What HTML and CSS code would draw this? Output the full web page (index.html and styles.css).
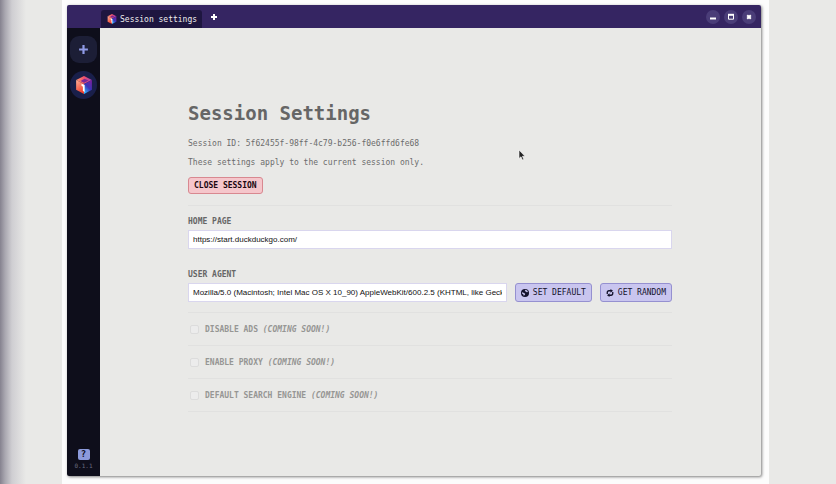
FILE: index.html
```html
<!DOCTYPE html>
<html lang="en">
<head>
    <meta charset="UTF-8">
    <meta name="viewport" content="width=device-width, initial-scale=1.0">
    <link rel="stylesheet" href="styles.css">
    <title>Session settings</title>
</head>
<body>
    <!-- shared logo -->
    <svg class="defs" width="0" height="0" aria-hidden="true">
        <defs>
            <linearGradient id="gradTop" x1="0" y1="0" x2="1" y2="0">
                <stop offset="0" stop-color="#ff9a70"/>
                <stop offset="0.5" stop-color="#f0506a"/>
                <stop offset="1" stop-color="#a03fb5"/>
            </linearGradient>
            <linearGradient id="gradLeft" x1="0" y1="0" x2="0.4" y2="1">
                <stop offset="0" stop-color="#ffb098"/>
                <stop offset="1" stop-color="#f0412f"/>
            </linearGradient>
            <linearGradient id="gradRight" x1="0.8" y1="0" x2="0.2" y2="1">
                <stop offset="0" stop-color="#7a20a0"/>
                <stop offset="0.5" stop-color="#3a35b8"/>
                <stop offset="1" stop-color="#38b8ff"/>
            </linearGradient>
            <symbol id="cube" viewBox="0 0 16 16">
                <path d="M8 0 L15 3.6 L8 7.2 L1 3.6 Z" fill="url(#gradTop)"/>
                <path d="M1 3.6 L8 7.2 V16 L1 12.2 Z" fill="url(#gradLeft)"/>
                <path d="M15 3.6 L8 7.2 V16 L15 12.2 Z" fill="url(#gradRight)"/>
                <path d="M8.5 2.4 L12 4 L8 6 L5 4.4 Z" fill="#7a2896"/>
                <path d="M5.8 6.8 L8.6 8 V14.2 L7 13.4 V9.4 L5.8 8.8 Z" fill="#fff"/>
            </symbol>
        </defs>
    </svg>

    <div class="stage">
        <div class="window">
            <header class="titlebar">
                <button class="tab" type="button">
                    <svg class="tab-logo"><use href="#cube"/></svg>
                    Session settings
                </button>
                <button class="new-tab" type="button" aria-label="New tab">
                    <svg viewBox="0 0 8 8"><path d="M4 1 V7 M1 4 H7"/></svg>
                </button>
                <div class="controls">
                    <button class="control" type="button" aria-label="Minimize">
                        <svg viewBox="0 0 8 8"><path d="M1 5.5 H7"/></svg>
                    </button>
                    <button class="control" type="button" aria-label="Maximize">
                        <svg viewBox="0 0 8 8"><path d="M1 1.8 H7" /><path class="thin" d="M1.5 2 V6.2 H6.5 V2"/></svg>
                    </button>
                    <button class="control" type="button" aria-label="Close">
                        <svg viewBox="0 0 8 8"><path d="M2.2 2.2 L5.8 5.8 M5.8 2.2 L2.2 5.8"/></svg>
                    </button>
                </div>
            </header>

            <nav class="sidebar">
                <button class="side-btn add" type="button" aria-label="New session">
                    <svg viewBox="0 0 10 10"><path d="M5 1 V9 M1 5 H9"/></svg>
                </button>
                <button class="side-btn session" type="button" aria-label="Current session">
                    <svg><use href="#cube"/></svg>
                </button>
                <div class="side-foot">
                    <button class="help" type="button">?</button>
                    <span class="version">0.1.1</span>
                </div>
            </nav>

            <main class="content">
                <form class="settings">
                    <h1>Session Settings</h1>
                    <p>Session ID: 5f62455f-98ff-4c79-b256-f0e6ffd6fe68</p>
                    <p>These settings apply to the current session only.</p>
                    <button class="btn danger" type="button">CLOSE SESSION</button>

                    <div class="fields">
                        <label for="homePage">HOME PAGE</label>
                        <input class="text" type="text" id="homePage" value="https://start.duckduckgo.com/">

                        <label for="userAgent">USER AGENT</label>
                        <div class="agent-row">
                            <input class="text" type="text" id="userAgent" value="Mozilla/5.0 (Macintosh; Intel Mac OS X 10_90) AppleWebKit/600.2.5 (KHTML, like Gecko) Version/8.0.2 Safari/600.2.5">
                            <button class="btn" type="button">
                                <svg viewBox="0 0 16 16">
                                    <circle cx="8" cy="8" r="8" fill="#14122c"/>
                                    <path d="M9 1.5 L12.5 3 L14 6 L11.5 6.5 L9.5 5 L7.5 4 Z M2 6.5 L5 7.5 L8.5 9.5 L7.5 12 L5.5 13.5 L4.5 10.5 L2 9 Z" fill="#c9c5ef"/>
                                </svg>
                                SET DEFAULT
                            </button>
                            <button class="btn" type="button">
                                <svg viewBox="0 0 16 16">
                                    <path d="M2.5 10 V7 Q2.5 3.5 6 3.5 H10 M13.5 6 V9 Q13.5 12.5 10 12.5 H6" fill="none" stroke="#14122c" stroke-width="2.6"/>
                                    <path d="M9 0 L14 3.5 L9 7.5 Z M7 8.5 L2 12.5 L7 16 Z" fill="#14122c"/>
                                </svg>
                                GET RANDOM
                            </button>
                        </div>
                    </div>

                    <div class="option">
                        <input type="checkbox" id="disableAds" disabled>
                        <label for="disableAds">DISABLE ADS <em>(COMING SOON!)</em></label>
                    </div>
                    <div class="option">
                        <input type="checkbox" id="enableProxy" disabled>
                        <label for="enableProxy">ENABLE PROXY <em>(COMING SOON!)</em></label>
                    </div>
                    <div class="option">
                        <input type="checkbox" id="searchEngine" disabled>
                        <label for="searchEngine">DEFAULT SEARCH ENGINE <em>(COMING SOON!)</em></label>
                    </div>
                </form>
            </main>
        </div>
    </div>

    <svg class="pointer" viewBox="0 0 8 12" aria-hidden="true">
        <path d="M1 1 V9.5 L3 7.8 L4.4 11 L5.8 10.3 L4.4 7.3 H7 Z" fill="#222" stroke="#fff" stroke-width="0.6"/>
    </svg>
</body>
</html>
```

FILE: styles.css
```css
* {
    box-sizing: border-box;
}

body {
    margin: 0;
    min-height: 100vh;
    padding: 0 67px 0 62px;
    background: linear-gradient(to right, #85828f 0, #a9a7b0 5px, #cfced2 12px, #e9e9e7 26px);
    font-family: "DejaVu Sans Mono", monospace;
    font-size: 8px;
    color: #666;
}

button {
    font: inherit;
    border: none;
    padding: 0;
    cursor: pointer;
}

.defs {
    position: absolute;
}

.stage {
    display: flex;
    min-height: 100vh;
    padding: 5px 8px 8px 5px;
    background-color: #fcfcfc;
}

.window {
    flex: 1;
    display: grid;
    grid-template-columns: 33px 1fr;
    grid-template-rows: 23px 1fr;
    background-color: #e9e9e7;
    border-radius: 2px;
    box-shadow: 1px 1px 3px rgba(0, 0, 0, 0.5);
}

/* title bar */
.titlebar {
    grid-column: 1 / 3;
    display: flex;
    align-items: flex-end;
    padding: 0 5px 0 34px;
    background-color: #352562;
    border-radius: 2px 2px 0 0;
}

.tab {
    display: flex;
    align-items: center;
    gap: 3px;
    height: 18px;
    padding: 0 5px 0 6px;
    background-color: #1e1640;
    color: #eee;
    border-radius: 3px 3px 0 0;
}

.tab-logo {
    width: 10px;
    height: 10px;
}

.new-tab {
    align-self: center;
    height: 8px;
    margin-left: 8px;
    background: none;
}

.new-tab svg {
    display: block;
    width: 8px;
    height: 8px;
    stroke: #fff;
    stroke-width: 2;
}

.controls {
    display: flex;
    align-self: center;
    gap: 4px;
    margin-left: auto;
}

.control {
    display: flex;
    align-items: center;
    justify-content: center;
    width: 14px;
    height: 14px;
    border-radius: 50%;
    background-color: #4a3d78;
}

.control svg {
    width: 8px;
    height: 8px;
    fill: none;
    stroke: #fff;
    stroke-width: 2;
}

.control .thin {
    stroke-width: 1;
}

/* sidebar */
.sidebar {
    display: flex;
    flex-direction: column;
    align-items: center;
    gap: 8px;
    padding: 8px 0 5px;
    background-color: #0e0e1b;
    border-radius: 0 0 0 2px;
}

.side-btn {
    display: flex;
    align-items: center;
    justify-content: center;
    width: 27px;
    height: 27px;
    border-radius: 9px;
    background-color: #1c1e36;
}

.add svg {
    width: 11px;
    height: 11px;
    stroke: #8f9ae6;
    stroke-width: 2;
}

.session {
    height: 28px;
    border-radius: 50%;
    background-color: #191f4a;
}

.session svg {
    width: 18px;
    height: 18px;
}

.side-foot {
    display: flex;
    flex-direction: column;
    align-items: center;
    gap: 1px;
    margin-top: auto;
}

.help {
    width: 12px;
    height: 11px;
    border-radius: 2px;
    background-color: #8c9adb;
    color: #0e0e1b;
    font-size: 9px;
    font-weight: bold;
    line-height: 11px;
}

.version {
    color: #6a6c80;
    font-size: 6px;
    line-height: 10px;
}

/* settings page */
.content {
    padding: 73px 89px 20px 88px;
}

h1 {
    margin: 0 0 14px;
    font-size: 19px;
    line-height: 24px;
}

p {
    margin: 0 0 9px;
    line-height: 10px;
    color: #6c6c6c;
}

.btn {
    display: flex;
    align-items: center;
    gap: 4px;
    height: 19px;
    padding: 0 5px;
    border: 1px solid #9590d0;
    border-radius: 3px;
    background-color: #c9c5ef;
    color: #14122c;
    white-space: nowrap;
}

.btn svg {
    width: 8px;
    height: 8px;
}

.danger {
    height: 17px;
    border-color: #d88890;
    background-color: #f5c6cb;
    color: #200810;
    font-weight: bold;
}

.fields {
    display: flex;
    flex-direction: column;
    margin-top: 11px;
    padding: 11px 0 10px;
    border-top: 1px solid #e1e1e0;
    border-bottom: 1px solid #e1e1e0;
}

.fields label {
    margin-bottom: 3px;
    font-weight: bold;
    line-height: 10px;
}

.text {
    width: 100%;
    height: 19px;
    padding: 0 4px;
    border: 1px solid #d9d6ee;
    background-color: #fff;
    color: #111;
    font-family: "Liberation Sans", Arial, sans-serif;
    font-size: 8px;
}

.fields > .text {
    margin-bottom: 21px;
}

.agent-row {
    display: flex;
    gap: 8px;
}

.agent-row .text {
    flex: 1;
    min-width: 0;
}

.option {
    display: flex;
    align-items: center;
    gap: 6px;
    height: 33px;
    padding-left: 2px;
    border-bottom: 1px solid #e1e1e0;
}

.option input {
    appearance: none;
    width: 9px;
    height: 9px;
    margin: 0;
    border: 1px solid #dcdcdc;
    border-radius: 2px;
    background-color: #ececec;
}

.option label {
    color: #969694;
    font-weight: bold;
}

.pointer {
    position: absolute;
    left: 518px;
    top: 149px;
    width: 8px;
    height: 12px;
}
```
